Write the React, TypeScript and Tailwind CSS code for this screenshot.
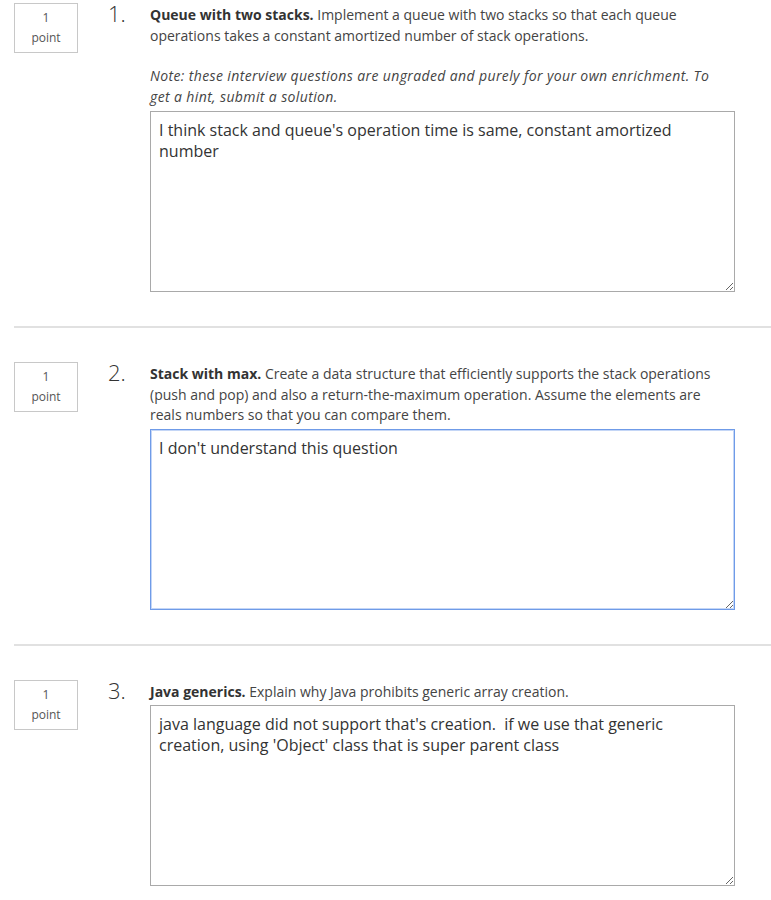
import React from 'react';

type Question = {
  num: number;
  title: string;
  body: string;
  note?: string;
  answer: string;
  focused?: boolean;
};

const QUESTIONS: Question[] = [
  {
    num: 1,
    title: 'Queue with two stacks.',
    body: 'Implement a queue with two stacks so that each queue operations takes a constant amortized number of stack operations.',
    note: 'Note: these interview questions are ungraded and purely for your own enrichment. To get a hint, submit a solution.',
    answer: "I think stack and queue's operation time is same, constant amortized number",
  },
  {
    num: 2,
    title: 'Stack with max.',
    body: 'Create a data structure that efficiently supports the stack operations (push and pop) and also a return-the-maximum operation. Assume the elements are reals numbers so that you can compare them.',
    answer: "I don't understand this question",
    focused: true,
  },
  {
    num: 3,
    title: 'Java generics.',
    body: 'Explain why Java prohibits generic array creation.',
    answer: "java language did not support that's creation.  if we use that generic creation, using 'Object' class that is super parent class",
  },
];

function QuestionBlock({ q, first }: { q: Question; first: boolean }) {
  return (
    <div className={first ? 'pt-[3px] pb-[34px]' : 'pt-[34px] pb-[34px]'}>
      <div className="flex">
        <div className="ml-[14px] w-[64px] h-[50px] border border-[#c8c8c8] flex flex-col items-center justify-center text-[12px] leading-[20px] text-[#555]">
          <span>1</span>
          <span>point</span>
        </div>
        <div className="w-[72px] pl-[30px] text-[22px] font-light leading-[20px] text-[#333]">
          {q.num}.
        </div>
        <div className="w-[585px] pt-[2px] text-[14px] leading-[20.5px] text-[#444]">
          <p>
            <span className="font-bold text-[#333]">{q.title}</span> {q.body}
          </p>
          {q.note && <p className="mt-[20px] w-[565px] italic tracking-[0.38px]">{q.note}</p>}
          <textarea
            defaultValue={q.answer}
            className={
              (q.note ? 'mt-[4px] ' : 'mt-[3px] ') +
              'block w-[585px] h-[181px] px-2 py-2 text-[16px] leading-[21px] text-[#333] bg-white outline-none ' +
              (q.focused
                ? 'border border-[#6f9be8] shadow-[inset_0_0_0_1px_#c4d6f6]'
                : 'border border-[#a9a9a9]')
            }
            style={{ fontFamily: '"Open Sans", sans-serif' }}
          />
        </div>
      </div>
    </div>
  );
}

export default function App() {
  return (
    <div className="w-[771px] bg-white min-h-[900px]" style={{ fontFamily: '"Open Sans", sans-serif' }}>
      {QUESTIONS.map((q, i) => (
        <React.Fragment key={q.num}>
          {i > 0 && <div className="ml-[14px] h-[2px] bg-[#e1e1e1]" />}
          <QuestionBlock q={q} first={i === 0} />
        </React.Fragment>
      ))}
    </div>
  );
}
